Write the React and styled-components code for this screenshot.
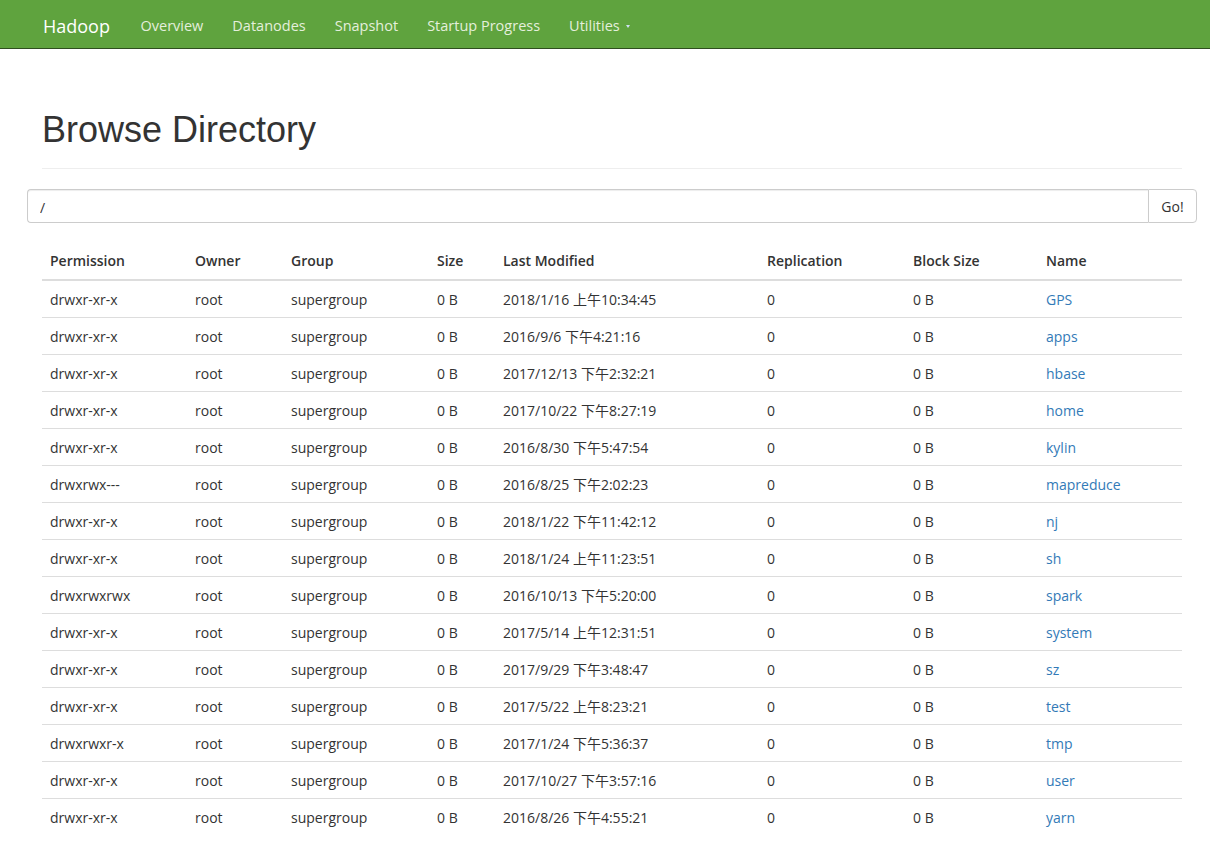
import React from "react";
import styled, { createGlobalStyle } from "styled-components";

const GlobalStyle = createGlobalStyle`
  * { box-sizing: border-box; }
  body {
    margin: 0;
    background: #fff;
    color: #333;
    font-family: "Open Sans", "Noto Sans", "Noto Sans CJK SC", sans-serif;
    font-size: 14px;
    line-height: 20px;
  }
`;

const Navbar = styled.nav`
  height: 49px;
  background-color: #5fa33e;
  border-bottom: 1px solid #2f4f1f;
`;

const NavInner = styled.div`
  width: 1140px;
  margin-left: 42px;
  height: 100%;
  padding-top: 3px;
  display: flex;
  align-items: center;
`;

const Brand = styled.a`
  color: #fff;
  font-size: 18px;
  text-decoration: none;
  margin-left: 1px;
  margin-right: 16px;
`;

const NavLink = styled.a`
  color: #e4efdc;
  font-size: 14.5px;
  text-decoration: none;
  padding: 0 14.5px;
  display: flex;
  align-items: center;
  gap: 6px;
`;

const Caret = styled.span`
  display: inline-block;
  width: 0;
  height: 0;
  border-left: 2.5px solid transparent;
  border-right: 2.5px solid transparent;
  border-top: 3px solid #cfe0f5;
  margin-top: 2px;
`;

const Container = styled.main`
  width: 1140px;
  margin-left: 42px;
`;

const PageHeader = styled.div`
  margin-top: 61px;
  padding-bottom: 18px;
  border-bottom: 1px solid #eee;
`;

const Title = styled.h1`
  margin: 0;
  font-family: "Liberation Sans", Arial, sans-serif;
  font-weight: 400;
  font-size: 36px;
  line-height: 1.1;
  color: #333;
`;

const InputGroup = styled.form`
  display: flex;
  margin: 20px -15px 0;
  height: 34px;
`;

const PathInput = styled.input`
  flex: 1;
  height: 34px;
  padding: 8px 12px 4px;
  border: 1px solid #ccc;
  border-right: 0;
  border-radius: 4px 0 0 4px;
  font: inherit;
  color: #333;
  outline: none;
  box-shadow: inset 0 1px 1px rgba(0, 0, 0, 0.075);
`;

const GoButton = styled.button`
  width: 49px;
  height: 34px;
  border: 1px solid #ccc;
  border-radius: 0 4px 4px 0;
  background: #fff;
  font: inherit;
  color: #333;
  padding: 3px 0 0;
`;

const Table = styled.table`
  width: 100%;
  margin-top: 20px;
  border-collapse: collapse;
  table-layout: fixed;
`;

const Th = styled.th`
  text-align: left;
  font-weight: 600;
  padding: 8px;
  border-bottom: 2px solid #ddd;
  vertical-align: bottom;
`;

const Td = styled.td`
  padding: 9px 8px 7px;
  border-top: 1px solid #ddd;
  white-space: nowrap;

  tbody tr:first-child > & {
    border-top: 0;
  }
`;

const FileLink = styled.a`
  color: #337ab7;
  text-decoration: none;
`;

const columns = [
  ["Permission", 145],
  ["Owner", 96],
  ["Group", 146],
  ["Size", 66],
  ["Last Modified", 264],
  ["Replication", 146],
  ["Block Size", 133],
  ["Name", 144],
];

const rows = [
  ["drwxr-xr-x", "2018/1/16 上午10:34:45", "GPS"],
  ["drwxr-xr-x", "2016/9/6 下午4:21:16", "apps"],
  ["drwxr-xr-x", "2017/12/13 下午2:32:21", "hbase"],
  ["drwxr-xr-x", "2017/10/22 下午8:27:19", "home"],
  ["drwxr-xr-x", "2016/8/30 下午5:47:54", "kylin"],
  ["drwxrwx---", "2016/8/25 下午2:02:23", "mapreduce"],
  ["drwxr-xr-x", "2018/1/22 下午11:42:12", "nj"],
  ["drwxr-xr-x", "2018/1/24 上午11:23:51", "sh"],
  ["drwxrwxrwx", "2016/10/13 下午5:20:00", "spark"],
  ["drwxr-xr-x", "2017/5/14 上午12:31:51", "system"],
  ["drwxr-xr-x", "2017/9/29 下午3:48:47", "sz"],
  ["drwxr-xr-x", "2017/5/22 上午8:23:21", "test"],
  ["drwxrwxr-x", "2017/1/24 下午5:36:37", "tmp"],
  ["drwxr-xr-x", "2017/10/27 下午3:57:16", "user"],
  ["drwxr-xr-x", "2016/8/26 下午4:55:21", "yarn"],
];

const App = () => (
  <>
    <GlobalStyle />
    <Navbar>
      <NavInner>
        <Brand href="#">Hadoop</Brand>
        <NavLink href="#">Overview</NavLink>
        <NavLink href="#">Datanodes</NavLink>
        <NavLink href="#">Snapshot</NavLink>
        <NavLink href="#">Startup Progress</NavLink>
        <NavLink href="#">
          Utilities <Caret />
        </NavLink>
      </NavInner>
    </Navbar>
    <Container>
      <PageHeader>
        <Title>Browse Directory</Title>
      </PageHeader>
      <InputGroup onSubmit={(e) => e.preventDefault()}>
        <PathInput defaultValue="/" />
        <GoButton type="submit">Go!</GoButton>
      </InputGroup>
      <Table>
        <colgroup>
          {columns.map(([name, w]) => (
            <col key={name} style={{ width: w }} />
          ))}
        </colgroup>
        <thead>
          <tr>
            {columns.map(([name]) => (
              <Th key={name}>{name}</Th>
            ))}
          </tr>
        </thead>
        <tbody>
          {rows.map(([perm, date, name]) => (
            <tr key={name}>
              <Td>{perm}</Td>
              <Td>root</Td>
              <Td>supergroup</Td>
              <Td>0 B</Td>
              <Td>{date}</Td>
              <Td>0</Td>
              <Td>0 B</Td>
              <Td>
                <FileLink href="#">{name}</FileLink>
              </Td>
            </tr>
          ))}
        </tbody>
      </Table>
    </Container>
  </>
);

export default App;
